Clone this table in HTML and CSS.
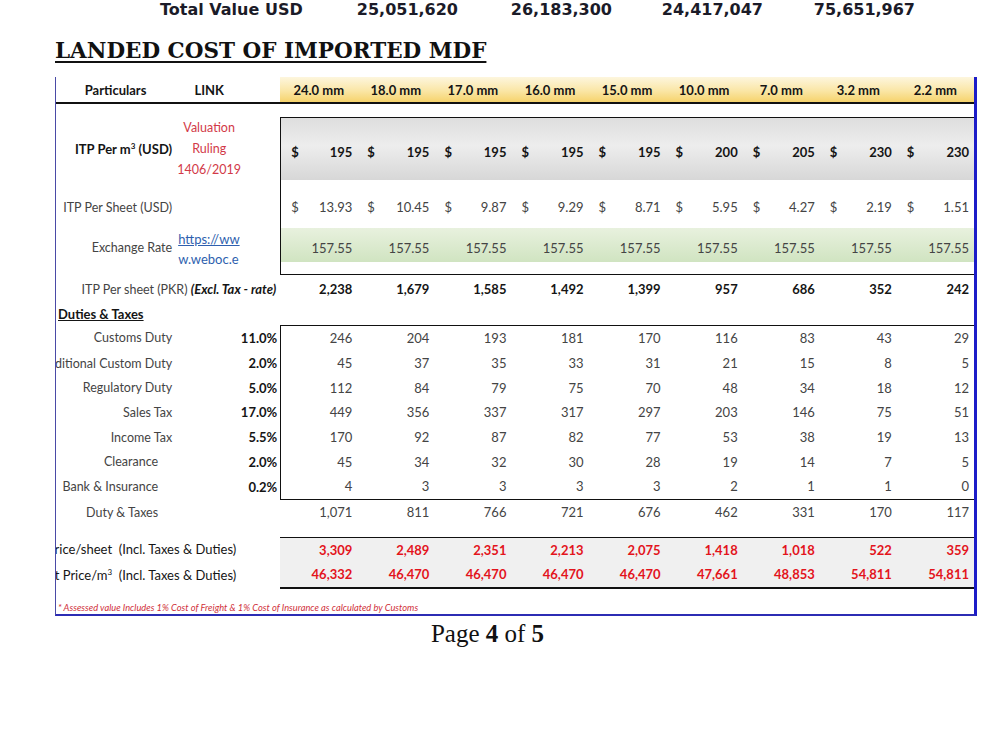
FILE: index.html
```html
<!DOCTYPE html>
<html lang="en">

<head>
    <meta charset="UTF-8">
    <title>Landed Cost of Imported MDF</title>
    <link rel="stylesheet" href="styles.css">
</head>

<body>
    <div class="totals">
        <span>Total Value USD</span>
        <span class="tv">25,051,620</span>
        <span class="tv">26,183,300</span>
        <span class="tv">24,417,047</span>
        <span class="tv">75,651,967</span>
    </div>

    <h1 class="title">LANDED COST OF IMPORTED MDF</h1>

    <div class="sheet">
        <table class="grid">
            <colgroup>
                <col class="c-label">
                <col class="c-link">
                <col class="c-pct">
                <col class="c-num" span="9">
            </colgroup>

            <tr class="head">
                <th>Particulars</th>
                <th>LINK</th>
                <th></th>
                <th class="mm">24.0 mm</th>
                <th class="mm">18.0 mm</th>
                <th class="mm">17.0 mm</th>
                <th class="mm">16.0 mm</th>
                <th class="mm">15.0 mm</th>
                <th class="mm">10.0 mm</th>
                <th class="mm">7.0 mm</th>
                <th class="mm">3.2 mm</th>
                <th class="mm">2.2 mm</th>
            </tr>
            <tr class="gap"><td colspan="12"></td></tr>

            <tr class="itp-m3">
                <td class="lbl dark">ITP Per m<sup>3</sup> (USD)</td>
                <td class="ruling">Valuation<br>Ruling<br>1406/2019</td>
                <td></td>
                <td class="num first"><span class="cur">$</span>195</td>
                <td class="num"><span class="cur">$</span>195</td>
                <td class="num"><span class="cur">$</span>195</td>
                <td class="num"><span class="cur">$</span>195</td>
                <td class="num"><span class="cur">$</span>195</td>
                <td class="num"><span class="cur">$</span>200</td>
                <td class="num"><span class="cur">$</span>205</td>
                <td class="num"><span class="cur">$</span>230</td>
                <td class="num"><span class="cur">$</span>230</td>
            </tr>
            <tr class="itp-sheet">
                <td class="lbl">ITP Per Sheet (USD)</td>
                <td></td>
                <td></td>
                <td class="num first"><span class="cur">$</span>13.93</td>
                <td class="num"><span class="cur">$</span>10.45</td>
                <td class="num"><span class="cur">$</span>9.87</td>
                <td class="num"><span class="cur">$</span>9.29</td>
                <td class="num"><span class="cur">$</span>8.71</td>
                <td class="num"><span class="cur">$</span>5.95</td>
                <td class="num"><span class="cur">$</span>4.27</td>
                <td class="num"><span class="cur">$</span>2.19</td>
                <td class="num"><span class="cur">$</span>1.51</td>
            </tr>
            <tr class="rate">
                <td class="lbl">Exchange Rate</td>
                <td class="weblink"><u>https://ww</u><br>w.weboc.e</td>
                <td></td>
                <td class="num first">157.55</td>
                <td class="num">157.55</td>
                <td class="num">157.55</td>
                <td class="num">157.55</td>
                <td class="num">157.55</td>
                <td class="num">157.55</td>
                <td class="num">157.55</td>
                <td class="num">157.55</td>
                <td class="num">157.55</td>
            </tr>

            <tr class="pkr">
                <td colspan="3" class="lbl wide">ITP Per sheet (PKR) <b><i>(Excl. Tax - rate)</i></b></td>
                <td class="num">2,238</td>
                <td class="num">1,679</td>
                <td class="num">1,585</td>
                <td class="num">1,492</td>
                <td class="num">1,399</td>
                <td class="num">957</td>
                <td class="num">686</td>
                <td class="num">352</td>
                <td class="num">242</td>
            </tr>
            <tr class="section">
                <td colspan="12"><span>Duties &amp; Taxes</span></td>
            </tr>

            <tr class="duty top">
                <td class="lbl"><div class="clip"><span>Customs Duty</span></div></td>
                <td colspan="2" class="pct">11.0%</td>
                <td class="num first">246</td>
                <td class="num">204</td>
                <td class="num">193</td>
                <td class="num">181</td>
                <td class="num">170</td>
                <td class="num">116</td>
                <td class="num">83</td>
                <td class="num">43</td>
                <td class="num">29</td>
            </tr>
            <tr class="duty">
                <td class="lbl"><div class="clip"><span>Additional Custom Duty</span></div></td>
                <td colspan="2" class="pct">2.0%</td>
                <td class="num first">45</td>
                <td class="num">37</td>
                <td class="num">35</td>
                <td class="num">33</td>
                <td class="num">31</td>
                <td class="num">21</td>
                <td class="num">15</td>
                <td class="num">8</td>
                <td class="num">5</td>
            </tr>
            <tr class="duty">
                <td class="lbl"><div class="clip"><span>Regulatory Duty</span></div></td>
                <td colspan="2" class="pct">5.0%</td>
                <td class="num first">112</td>
                <td class="num">84</td>
                <td class="num">79</td>
                <td class="num">75</td>
                <td class="num">70</td>
                <td class="num">48</td>
                <td class="num">34</td>
                <td class="num">18</td>
                <td class="num">12</td>
            </tr>
            <tr class="duty">
                <td class="lbl"><div class="clip"><span>Sales Tax</span></div></td>
                <td colspan="2" class="pct">17.0%</td>
                <td class="num first">449</td>
                <td class="num">356</td>
                <td class="num">337</td>
                <td class="num">317</td>
                <td class="num">297</td>
                <td class="num">203</td>
                <td class="num">146</td>
                <td class="num">75</td>
                <td class="num">51</td>
            </tr>
            <tr class="duty">
                <td class="lbl"><div class="clip"><span>Income Tax</span></div></td>
                <td colspan="2" class="pct">5.5%</td>
                <td class="num first">170</td>
                <td class="num">92</td>
                <td class="num">87</td>
                <td class="num">82</td>
                <td class="num">77</td>
                <td class="num">53</td>
                <td class="num">38</td>
                <td class="num">19</td>
                <td class="num">13</td>
            </tr>
            <tr class="duty">
                <td class="lbl inset"><div class="clip"><span>Clearance</span></div></td>
                <td colspan="2" class="pct">2.0%</td>
                <td class="num first">45</td>
                <td class="num">34</td>
                <td class="num">32</td>
                <td class="num">30</td>
                <td class="num">28</td>
                <td class="num">19</td>
                <td class="num">14</td>
                <td class="num">7</td>
                <td class="num">5</td>
            </tr>
            <tr class="duty bottom">
                <td class="lbl inset"><div class="clip"><span>Bank &amp; Insurance</span></div></td>
                <td colspan="2" class="pct">0.2%</td>
                <td class="num first">4</td>
                <td class="num">3</td>
                <td class="num">3</td>
                <td class="num">3</td>
                <td class="num">3</td>
                <td class="num">2</td>
                <td class="num">1</td>
                <td class="num">1</td>
                <td class="num">0</td>
            </tr>
            <tr class="duty">
                <td class="lbl inset"><div class="clip"><span>Duty &amp; Taxes</span></div></td>
                <td colspan="2"></td>
                <td class="num">1,071</td>
                <td class="num">811</td>
                <td class="num">766</td>
                <td class="num">721</td>
                <td class="num">676</td>
                <td class="num">462</td>
                <td class="num">331</td>
                <td class="num">170</td>
                <td class="num">117</td>
            </tr>
            <tr class="gap short"><td colspan="12"></td></tr>

            <tr class="price top">
                <td colspan="3" class="lbl price-lbl"><div class="clip"><span>Landed Price/sheet &nbsp;(Incl. Taxes &amp; Duties)</span></div></td>
                <td class="num">3,309</td>
                <td class="num">2,489</td>
                <td class="num">2,351</td>
                <td class="num">2,213</td>
                <td class="num">2,075</td>
                <td class="num">1,418</td>
                <td class="num">1,018</td>
                <td class="num">522</td>
                <td class="num">359</td>
            </tr>
            <tr class="price bottom">
                <td colspan="3" class="lbl price-lbl"><div class="clip"><span>Landed Cost Price/m<sup>3</sup> &nbsp;(Incl. Taxes &amp; Duties)</span></div></td>
                <td class="num">46,332</td>
                <td class="num">46,470</td>
                <td class="num">46,470</td>
                <td class="num">46,470</td>
                <td class="num">46,470</td>
                <td class="num">47,661</td>
                <td class="num">48,853</td>
                <td class="num">54,811</td>
                <td class="num">54,811</td>
            </tr>

            <tr class="note">
                <td colspan="12">* Assessed value Includes 1% Cost of Freight &amp; 1% Cost of Insurance as calculated by Customs</td>
            </tr>
        </table>
    </div>

    <div class="page">Page <b>4</b> of <b>5</b></div>
</body>

</html>
```

FILE: styles.css
```css
body {
    margin: 0;
    background: #fff;
    color: #1a1a1a;
}

/* totals strip at the top of the page */
.totals {
    display: grid;
    grid-template-columns: 148px 150px 154px 151px 152px;
    margin-left: 160px;
    padding-top: 2px;
    height: 16px;
    font: bold 16px/16px "DejaVu Sans", sans-serif;
    color: #1b1b28;
}

.totals .tv {
    text-align: right;
}

.title {
    margin: 20px 0 13px 55px;
    font: bold 21.5px/26px "DejaVu Serif", serif;
    color: #111;
    text-decoration: underline;
    text-underline-offset: 3px;
    text-decoration-thickness: 2px;
}

/* the spreadsheet area */
.sheet {
    margin-left: 55px;
    width: 918px;
    border-left: 1px solid #4a4aa6;
    border-right: 3px solid #1c1cc8;
    border-bottom: 2px solid #2c2cb4;
    overflow: hidden;
}

.grid {
    width: 918px;
    table-layout: fixed;
    border-collapse: separate;
    border-spacing: 0;
    font-family: Lato, "Open Sans", sans-serif;
    font-size: 12.5px;
    color: #444;
}

.c-label {
    width: 119px;
}

.c-link {
    width: 68px;
}

.c-pct {
    width: 37px;
}

.c-num {
    width: 77px;
}

.grid td,
.grid th {
    padding: 0;
    white-space: nowrap;
}

sup {
    font-size: 8px;
    line-height: 0;
}

/* header row */
.head th {
    height: 25px;
    border-bottom: 2px solid #111;
    font-size: 13px;
    font-weight: bold;
    color: #151515;
    text-align: center;
    vertical-align: middle;
}

.head .mm {
    background: linear-gradient(#fdf6de, #fae6a6 55%, #f6d36c);
}

.gap td {
    height: 13px;
}

.gap.short td {
    height: 12px;
}

/* numeric cells */
.num {
    text-align: right;
    font-size: 13px;
    padding-right: 5px !important;
    padding-left: 10px !important;
}

.cur {
    float: left;
}

.lbl {
    text-align: right;
    padding-right: 3px !important;
}

.dark {
    font-size: 13px;
    color: #151515;
    font-weight: bold;
}

.ruling {
    text-align: center;
    color: #d23a48;
    line-height: 21px;
}

.weblink {
    padding-left: 3px !important;
    font-size: 13px;
    line-height: 20px;
    color: #2e5fae;
}

/* ITP box */
.itp-m3 td {
    height: 56px;
    vertical-align: middle;
}

.itp-m3 .num {
    border-top: 1px solid #111;
    padding-top: 6px !important;
    font-weight: bold;
    color: #151515;
    background: linear-gradient(#dedede, #ededed 45%, #d7d7d7);
}

.itp-sheet td {
    height: 42px;
    vertical-align: middle;
    padding-top: 6px;
}

.rate td {
    height: 34px;
    vertical-align: top;
    padding-top: 12px;
}

.rate .weblink {
    padding-top: 1px;
}

.rate .num {
    border-bottom: 1px solid #111;
    background: linear-gradient(#e8f1de, #d0e4c1 34px, #fff 34px);
}

.num.first {
    border-left: 1px solid #111;
}

.pkr td {
    height: 28px;
    vertical-align: middle;
}

.pkr .num {
    font-weight: bold;
    color: #151515;
}

.wide {
    padding-right: 4px !important;
}

.wide b {
    font-size: 13px;
    color: #151515;
}

.section td {
    height: 22px;
    vertical-align: middle;
    padding-left: 2px;
}

.section span {
    font-size: 13px;
    font-weight: bold;
    color: #151515;
    text-decoration: underline;
}

/* duties block */
.duty td {
    height: 24.7px;
    vertical-align: middle;
}

.duty.top .num {
    border-top: 1px solid #111;
}

.duty.bottom .num {
    border-bottom: 1px solid #111;
}

.clip {
    display: flex;
    justify-content: flex-end;
}

.inset {
    padding-right: 17px !important;
}

.pct {
    text-align: right;
    padding-right: 3px !important;
    font-size: 13px;
    font-weight: bold;
    color: #151515;
}

/* landed price block */
.price td {
    height: 24.5px;
    vertical-align: middle;
}

.price .num {
    background: #f0f0f0;
    color: #e3141c;
    font-weight: bold;
    padding-right: 5px !important;
}

.price.top .num {
    border-top: 1px solid #111;
}

.price.bottom .num {
    border-bottom: 2px solid #111;
}

.price-lbl {
    padding-right: 44px !important;
    font-size: 13px;
    color: #151515;
}

.note td {
    height: 24px;
    vertical-align: bottom;
    padding: 0 0 1px 2px;
    font-size: 9.3px;
    font-style: italic;
    color: #d0303a;
}

.page {
    width: 975px;
    margin-top: 4px;
    text-align: center;
    font: 25px/28px "Liberation Serif", serif;
    color: #111;
}
```
